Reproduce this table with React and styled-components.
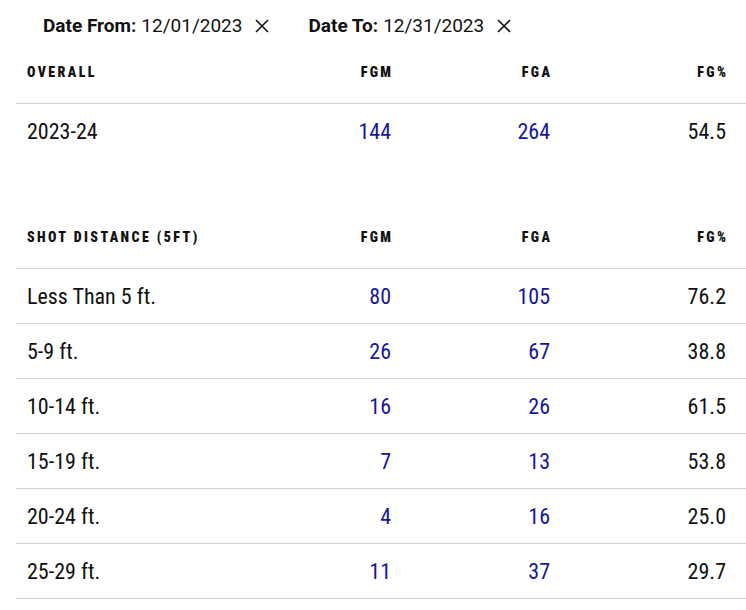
import React from "react";
import styled, { createGlobalStyle } from "styled-components";

const overall = [{ label: "2023-24", fgm: 144, fga: 264, pct: "54.5" }];

const distance = [
  { label: "Less Than 5 ft.", fgm: 80, fga: 105, pct: "76.2" },
  { label: "5-9 ft.", fgm: 26, fga: 67, pct: "38.8" },
  { label: "10-14 ft.", fgm: 16, fga: 26, pct: "61.5" },
  { label: "15-19 ft.", fgm: 7, fga: 13, pct: "53.8" },
  { label: "20-24 ft.", fgm: 4, fga: 16, pct: "25.0" },
  { label: "25-29 ft.", fgm: 11, fga: 37, pct: "29.7" },
];

const CloseIcon = () => (
  <svg width="14" height="14" viewBox="0 0 14 14">
    <path d="M1 1L13 13M13 1L1 13" stroke="#111" strokeWidth="1.6" fill="none" />
  </svg>
);

const StatTable = ({ title, rows, lastBorder }) => (
  <Table>
    <HeadRow>
      <HeadCell>{title}</HeadCell>
      <HeadCell $right>FGM</HeadCell>
      <HeadCell $right>FGA</HeadCell>
      <HeadCell $right>FG%</HeadCell>
    </HeadRow>
    {rows.map((r) => (
      <Row key={r.label} $border={lastBorder}>
        <Cell>{r.label}</Cell>
        <Cell $right $link>{r.fgm}</Cell>
        <Cell $right $link>{r.fga}</Cell>
        <Cell $right>{r.pct}</Cell>
      </Row>
    ))}
  </Table>
);

const App = () => {
  return (
    <Page>
      <GlobalStyle />
      <Filters>
        <Filter>
          <b>Date From:</b> 12/01/2023
          <CloseIcon />
        </Filter>
        <Filter>
          <b>Date To:</b> 12/31/2023
          <CloseIcon />
        </Filter>
      </Filters>
      <StatTable title="OVERALL" rows={overall} />
      <Spacer />
      <StatTable title="SHOT DISTANCE (5FT)" rows={distance} lastBorder />
    </Page>
  );
};

const GlobalStyle = createGlobalStyle`
body{
  margin:0;
  background:#fff;
  font-family: Roboto, "Noto Sans", sans-serif;
  color:#111;
}
*{ box-sizing:border-box; }
`;

const Page = styled.div`
padding-left:16px;
overflow:hidden;
`;

const Filters = styled.div`
display:flex;
gap:39px;
padding:10px 0 0 27px;
height:41px;
align-items:center;
`;

const Filter = styled.div`
display:flex;
align-items:center;
gap:5px;
font-size:19px;
color:#111;
svg{
  margin-left:8px;
}
b{
  font-weight:700;
}
`;

const Table = styled.div`
width:730px;
`;

const grid = `
display:grid;
grid-template-columns: 1fr 120px 159px 176px;
padding:0 20px 0 11px;
align-items:center;
`;

const HeadRow = styled.div`
${grid}
height:63px;
border-bottom:1px solid #d3cfcb;
`;

const HeadCell = styled.div`
font-family: "Roboto Condensed", Roboto, sans-serif;
font-weight:900;
font-size:14px;
letter-spacing:2.4px;
text-align:${(p) => (p.$right ? "right" : "left")};
margin-right:${(p) => (p.$right ? "-2.4px" : "0")};
`;

const Row = styled.div`
${grid}
height:55px;
border-bottom:${(p) => (p.$border ? "1px solid #d3cfcb" : "none")};
`;

const Cell = styled.div`
font-family: "Roboto Condensed", Roboto, sans-serif;
font-size:22px;
text-align:${(p) => (p.$right ? "right" : "left")};
color:${(p) => (p.$link ? "#16169c" : "#111")};
`;

const Spacer = styled.div`
height:47px;
`;

export default App;
